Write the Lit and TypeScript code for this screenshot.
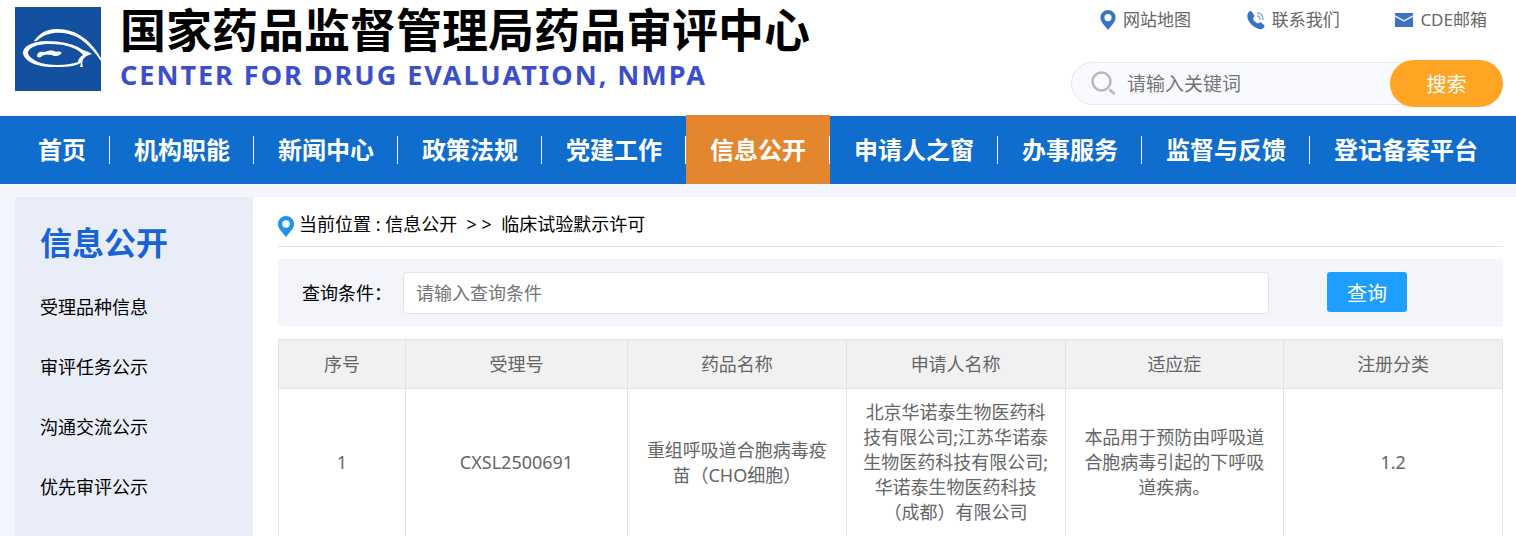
import { LitElement, html, svg, css } from "lit";
import { customElement, state } from "lit/decorators.js";
import { classMap } from "lit/directives/class-map.js";

const NAV = ["首页", "机构职能", "新闻中心", "政策法规", "党建工作", "信息公开", "申请人之窗", "办事服务", "监督与反馈", "登记备案平台"];
const SIDE = ["受理品种信息", "审评任务公示", "沟通交流公示", "优先审评公示"];
const COLUMNS = ["序号", "受理号", "药品名称", "申请人名称", "适应症", "注册分类"];
const ROWS = [
  [
    "1",
    "CXSL2500691",
    "重组呼吸道合胞病毒疫苗（CHO细胞）",
    "北京华诺泰生物医药科技有限公司;江苏华诺泰生物医药科技有限公司;华诺泰生物医药科技（成都）有限公司",
    "本品用于预防由呼吸道合胞病毒引起的下呼吸道疾病。",
    "1.2",
  ],
];

const pin = svg`<path fill-rule="evenodd" d="M8 0a8 8 0 0 1 8 8c0 4.500-4.500 8.500-8 13C4.500 16.500 0 12.500 0 8a8 8 0 0 1 8-8zm0 4.200a3.800 3.800 0 1 0 0 7.600a3.800 3.800 0 0 0 0-7.600z"/>`;

@customElement("app-root")
export class AppRoot extends LitElement {
  @state() private active = "信息公开";

  static styles = css`
    :host {
      display: block;
      min-height: 100vh;
      background: #f3f6ff;
      font-family: "Noto Sans", "Noto Sans CJK SC", sans-serif;
      font-size: 18px;
      color: #000;
    }
    * { box-sizing: border-box; }
    a { color: inherit; text-decoration: none; }
    ul { list-style: none; margin: 0; padding: 0; }
    input, button { font: inherit; margin: 0; }
    svg { display: block; flex: none; overflow: visible; }
    header {
      display: flex;
      justify-content: space-between;
      height: 116px;
      padding: 7px 13px 0 15px;
      background: #fff;
    }
    .brand { display: flex; gap: 17px; }
    .name { margin: 0; font-size: 46px; line-height: 44px; font-weight: 700; white-space: nowrap; }
    .english {
      margin: 7px 0 0;
      font-family: "Noto Sans", sans-serif;
      font-size: 27px;
      line-height: 34px;
      font-weight: 700;
      letter-spacing: 2px;
      color: #3b4fc8;
      white-space: nowrap;
    }
    .tools { width: 432px; }
    .links { display: flex; justify-content: space-between; padding: 0 16px 0 29px; font-size: 17px; line-height: 26px; color: #666; }
    .links a { display: flex; align-items: center; gap: 7px; }
    .links svg { fill: #3a72c4; }
    .search { display: flex; align-items: center; margin-top: 27px; }
    .field {
      flex: 1;
      display: flex;
      align-items: center;
      gap: 11px;
      height: 43px;
      padding-left: 19px;
      border: 1px solid #e4e6ec;
      border-radius: 22px;
      background: #f9faff;
    }
    .field input { flex: 1; min-width: 0; border: 0; outline: 0; padding: 0; background: none; font-size: 19px; }
    input::placeholder { color: #757575; opacity: 1; }
    .go {
      width: 113px;
      height: 47px;
      margin-left: -57px;
      border: 0;
      border-radius: 24px;
      background: #ffa423;
      color: #fff;
      font-size: 20px;
    }
    nav ul { display: flex; height: 68px; padding: 0 14px; background: #0e6dcd; }
    nav li { display: flex; align-items: center; }
    nav a { line-height: 68px; padding: 0 24px; font-size: 24px; font-weight: 700; color: #fff; white-space: nowrap; }
    nav li:not(:last-child)::after { content: ""; width: 1px; height: 28px; margin-left: -1px; background: #fff; }
    nav .on { background: #e4862e; box-shadow: 0 -1px 0 #e4862e; }
    .body { display: flex; padding: 13px 0 0 15px; }
    aside { width: 238px; padding: 22px 25px; background: #e8edf7; }
    .side-title { margin: 0 0 10px; font-size: 32px; line-height: 48px; color: #1763d8; }
    aside a { display: block; line-height: 60px; }
    main { flex: 1; min-width: 0; padding: 0 13px 0 25px; background: #fff; }
    .crumbs { display: flex; align-items: flex-start; gap: 5px; height: 50px; padding-top: 14px; line-height: 26px; border-bottom: 1px solid #e2e2e2; }
    .crumbs svg { margin-top: 5px; fill: #1e94f0; }
    .query { display: flex; align-items: flex-start; height: 67px; margin: 12px 0 13px; padding: 13px 96px 0 24px; background: #f4f5fb; }
    .query label { width: 101px; line-height: 42px; }
    .query input { flex: 1; min-width: 0; height: 42px; padding: 0 12px; border: 1px solid #e4e4e8; border-radius: 4px; background: #fff; }
    .query button { width: 80px; height: 40px; margin-left: 58px; padding: 0; border: 0; border-radius: 3px; background: #1e9fff; color: #fff; font-size: 20px; }
    table { width: 100%; table-layout: fixed; border-collapse: collapse; color: #666; line-height: 25px; }
    .c-no { width: 127px; }
    .c-id { width: 222px; }
    th, td { padding: 11px 15px; border: 1px solid #e2e2e2; text-align: center; font-weight: 400; }
    th { padding-top: 12px; background: #f1f1f1; }
  `;

  render() {
    return html`
      <header>
        <div class="brand">
          <svg width="88" height="84" viewBox="0 0 88 84" role="img" aria-label="CDE">
            <rect width="86" height="84" fill="#1450a0" />
            <path fill="#fff" d="M19 34C24 27 30 22 42 22C62 22 77 34 87 53C88 55 89 57 88 57C82 48 73 36 62 30C48 23 32 25 24 32C22 34 20 35 19 34z" />
            <path fill="#fff" fill-rule="evenodd" d="M75 46C73 44 70 44 68 43C60 37 46 34 30 34C15 35 8 40 8 46C9 54 21 60 38 60C50 60 59 60 66 56L65 60L68 60C66 54 68 49 77 47zM63 55C52 59 33 59 23 55C15 51 11 47 14 43C20 36 40 36 52 39C60 41 65 44 68 48C65 50 63 52 63 55z" />
            <path fill="#fff" d="M22 49C22 45 26 44 30 45C34 43 39 43 41 45C44 44 48 45 46 47C44 49 39 50 37 48C32 48 29 47 26 50C24 51 22 50 22 49z" />
          </svg>
          <div>
            <h1 class="name">国家药品监督管理局药品审评中心</h1>
            <p class="english">CENTER FOR DRUG EVALUATION, NMPA</p>
          </div>
        </div>
        <div class="tools">
          <div class="links">
            <a href="#map"><svg width="16" height="20" viewBox="0 0 16 21">${pin}</svg>网站地图</a>
            <a href="#contact">
              <svg width="18" height="18" viewBox="0 0 18 18">
                <path d="M1 2C2 0 4 -1 5 1L7 4C8 6 6 7 6 8C7 10 9 12 11 12.500C12 12 13 10.500 14 11.500L17 14C19 16 15 19 12 18C5 16-2 8 1 2z" />
                <path fill="none" stroke="#8fb0de" stroke-width="1.500" d="M10 5q3 0 3 4M10 2q6 0 6 7" />
              </svg>联系我们</a>
            <a href="#mail">
              <svg width="18" height="14" viewBox="0 0 18 14">
                <rect width="18" height="14" />
                <path fill="none" stroke="#dce8f8" stroke-width="1.500" d="M0 3l9 5l9-5" />
              </svg>CDE邮箱</a>
          </div>
          <form class="search" @submit=${(e: Event) => e.preventDefault()}>
            <div class="field">
              <svg width="25" height="25" viewBox="0 0 25 25" fill="none" stroke="#b9b9bb" stroke-width="2.500">
                <circle cx="10.500" cy="10.500" r="9" /><path d="M18.500 18.500l5 4.500" />
              </svg>
              <input type="text" aria-label="关键词" placeholder="请输入关键词" />
            </div>
            <button class="go">搜索</button>
          </form>
        </div>
      </header>
      <nav>
        <ul>
          ${NAV.map((n) => html`<li><a href="#nav" class=${classMap({ on: n === this.active })} @click=${() => (this.active = n)}>${n}</a></li>`)}
        </ul>
      </nav>
      <div class="body">
        <aside>
          <h2 class="side-title">信息公开</h2>
          <ul>${SIDE.map((s) => html`<li><a href="#side">${s}</a></li>`)}</ul>
        </aside>
        <main>
          <div class="crumbs">
            <svg width="16" height="21" viewBox="0 0 16 21">${pin}</svg>
            <span>当前位置 : <a href="#info">信息公开</a>&nbsp; &gt; &gt; &nbsp;<a href="#trial">临床试验默示许可</a></span>
          </div>
          <form class="query" @submit=${(e: Event) => e.preventDefault()}>
            <label for="q">查询条件：</label>
            <input id="q" type="text" placeholder="请输入查询条件" />
            <button>查询</button>
          </form>
          <table>
            <colgroup><col class="c-no" /><col class="c-id" /><col /><col /><col /><col /></colgroup>
            <thead><tr>${COLUMNS.map((c) => html`<th>${c}</th>`)}</tr></thead>
            <tbody>${ROWS.map((r) => html`<tr>${r.map((c) => html`<td>${c}</td>`)}</tr>`)}</tbody>
          </table>
        </main>
      </div>
    `;
  }
}
